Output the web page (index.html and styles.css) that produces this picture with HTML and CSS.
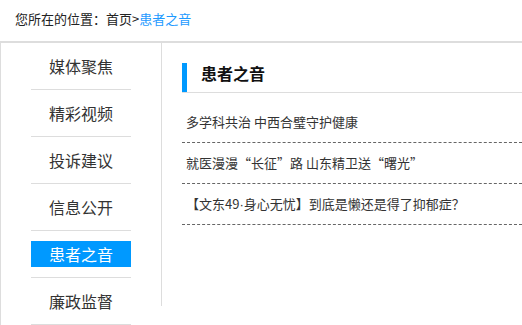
FILE: index.html
```html
<!DOCTYPE html>
<html lang="zh-CN">
<head>
    <meta charset="UTF-8">
    <title>患者之音</title>
    <link rel="stylesheet" href="styles.css">
</head>
<body>
    <div class="crumb">您所在的位置：<a href="#">首页</a>&gt;<a href="#" class="current">患者之音</a></div>
    <div class="main">
        <ul class="side-nav">
            <li><a href="#">媒体聚焦</a></li>
            <li><a href="#">精彩视频</a></li>
            <li><a href="#">投诉建议</a></li>
            <li><a href="#">信息公开</a></li>
            <li class="active"><a href="#">患者之音</a></li>
            <li><a href="#">廉政监督</a></li>
        </ul>
        <div class="content">
            <h2 class="title">患者之音</h2>
            <ul class="news-list">
                <li><a href="#">多学科共治 中西合璧守护健康</a></li>
                <li><a href="#">就医漫漫“长征”路 山东精卫送“曙光”</a></li>
                <li><a href="#">【文东49<span class="dot">·</span>身心无忧】到底是懒还是得了抑郁症？</a></li>
            </ul>
        </div>
    </div>
</body>
</html>
```

FILE: styles.css
```css
body {
    margin: 0;
    padding: 0;
    font-family: "Noto Sans CJK SC", "Noto Sans", sans-serif;
    color: #333;
    background: #fff;
    overflow: hidden;
}
a {
    color: inherit;
    text-decoration: none;
}
ul {
    list-style: none;
    margin: 0;
    padding: 0;
}
.crumb {
    height: 41px;
    line-height: 38px;
    padding-left: 15px;
    font-size: 13px;
    color: #222;
}
.crumb .current { color: #1e9bff; }
.main {
    display: flex;
    align-items: flex-start;
    border-top: 2px solid #ddd;
    border-left: 1px solid #ddd;
}
.side-nav {
    width: 100px;
    padding: 0 30px;
    flex-shrink: 0;
}
.side-nav li {
    padding: 10px 0;
    border-bottom: 1px solid #ddd;
    text-align: center;
}
.side-nav a {
    display: block;
    height: 26px;
    line-height: 26px;
    font-size: 16px;
    color: #333;
}
.side-nav .active a {
    background: #0099ff;
    color: #fff;
}
.content {
    flex: 1;
    min-height: 263px;
    border-left: 1px solid #ddd;
    padding-left: 20px;
}
.title {
    margin: 20px 0 0;
    height: 29px;
    line-height: 20px;
    padding-left: 14px;
    border-left: 5px solid #0099ff;
    font-size: 16px;
    font-weight: bold;
    color: #111;
}
.title::after {
    content: "";
    display: block;
    margin-left: -19px;
    margin-top: 9px;
    border-bottom: 1px solid #ddd;
}
.news-list {
    margin-top: 10px;
}
.news-list li {
    height: 40px;
    line-height: 40px;
    padding-left: 4px;
    border-bottom: 1px dashed #666;
    font-size: 13px;
}
.news-list .dot {
    font-family: "Liberation Sans", sans-serif;
}
```
